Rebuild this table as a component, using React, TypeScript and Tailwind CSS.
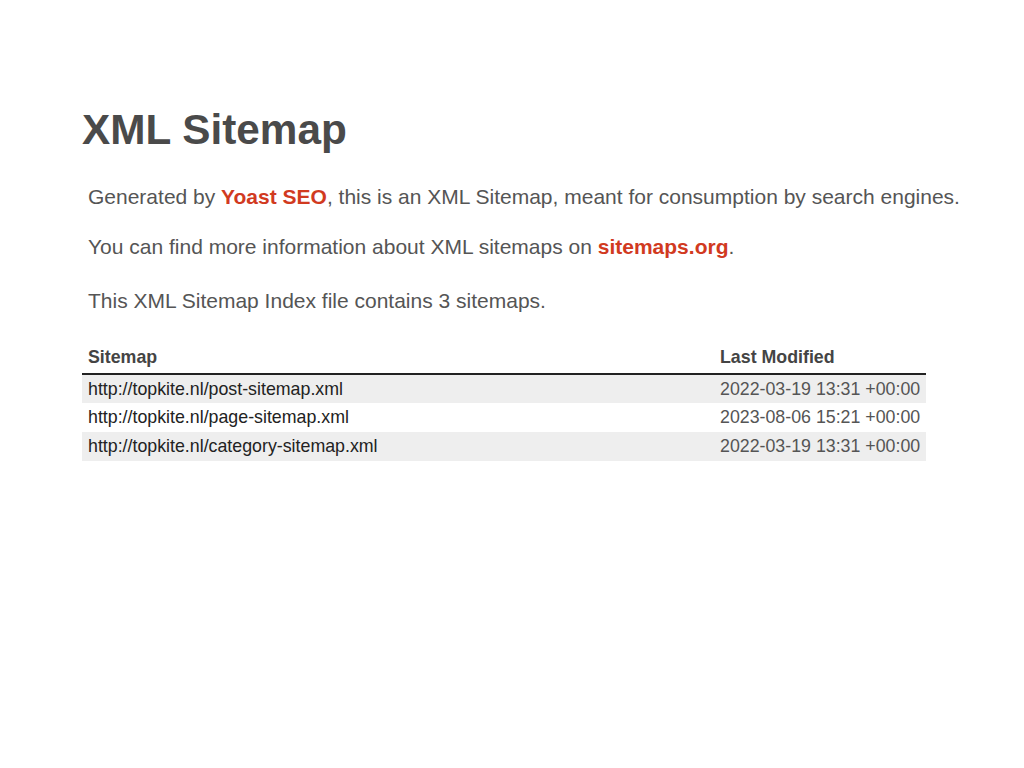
const sitemaps = [
  { url: "http://topkite.nl/post-sitemap.xml", mod: "2022-03-19 13:31 +00:00" },
  { url: "http://topkite.nl/page-sitemap.xml", mod: "2023-08-06 15:21 +00:00" },
  { url: "http://topkite.nl/category-sitemap.xml", mod: "2022-03-19 13:31 +00:00" },
];

export default function App() {
  return (
    <div className="min-h-[768px] bg-white font-['Liberation_Sans',Arial,sans-serif]">
      <div className="pl-[82px] pt-[104px]">
        <h1 className="text-[42.3px] leading-[52px] font-bold text-[#4a4a4a]">XML Sitemap</h1>
        <p className="mt-[28px] ml-[6px] whitespace-nowrap text-[21px] leading-[26px] text-[#555]">
          Generated by <span className="font-bold text-[#d13a1f]">Yoast SEO</span>, this is an XML Sitemap, meant for
          consumption by search engines.
        </p>
        <p className="mt-[24px] ml-[6px] whitespace-nowrap text-[21px] leading-[26px] text-[#555]">
          You can find more information about XML sitemaps on{" "}
          <span className="font-bold text-[#d13a1f]">sitemaps.org</span>.
        </p>
        <p className="mt-[28px] ml-[6px] whitespace-nowrap text-[21px] leading-[26px] text-[#555]">
          This XML Sitemap Index file contains 3 sitemaps.
        </p>
        <table className="mt-[31px] w-[844px] border-collapse text-[17.8px]">
          <thead>
            <tr className="border-b-2 border-[#222]">
              <th className="text-left font-bold text-[#444] px-[6px] pb-[4px] leading-[24px]">Sitemap</th>
              <th className="text-left font-bold text-[#444] px-[5px] pb-[4px] leading-[24px] w-[211px]">Last Modified</th>
            </tr>
          </thead>
          <tbody>
            {sitemaps.map((s, i) => (
              <tr key={s.url} className={i % 2 === 0 ? "bg-[#eee]" : "bg-white"}>
                <td className="px-[6px] h-[29px] text-[#222]">{s.url}</td>
                <td className="px-[5px] h-[29px] text-[#555]">{s.mod}</td>
              </tr>
            ))}
          </tbody>
        </table>
      </div>
    </div>
  );
}
